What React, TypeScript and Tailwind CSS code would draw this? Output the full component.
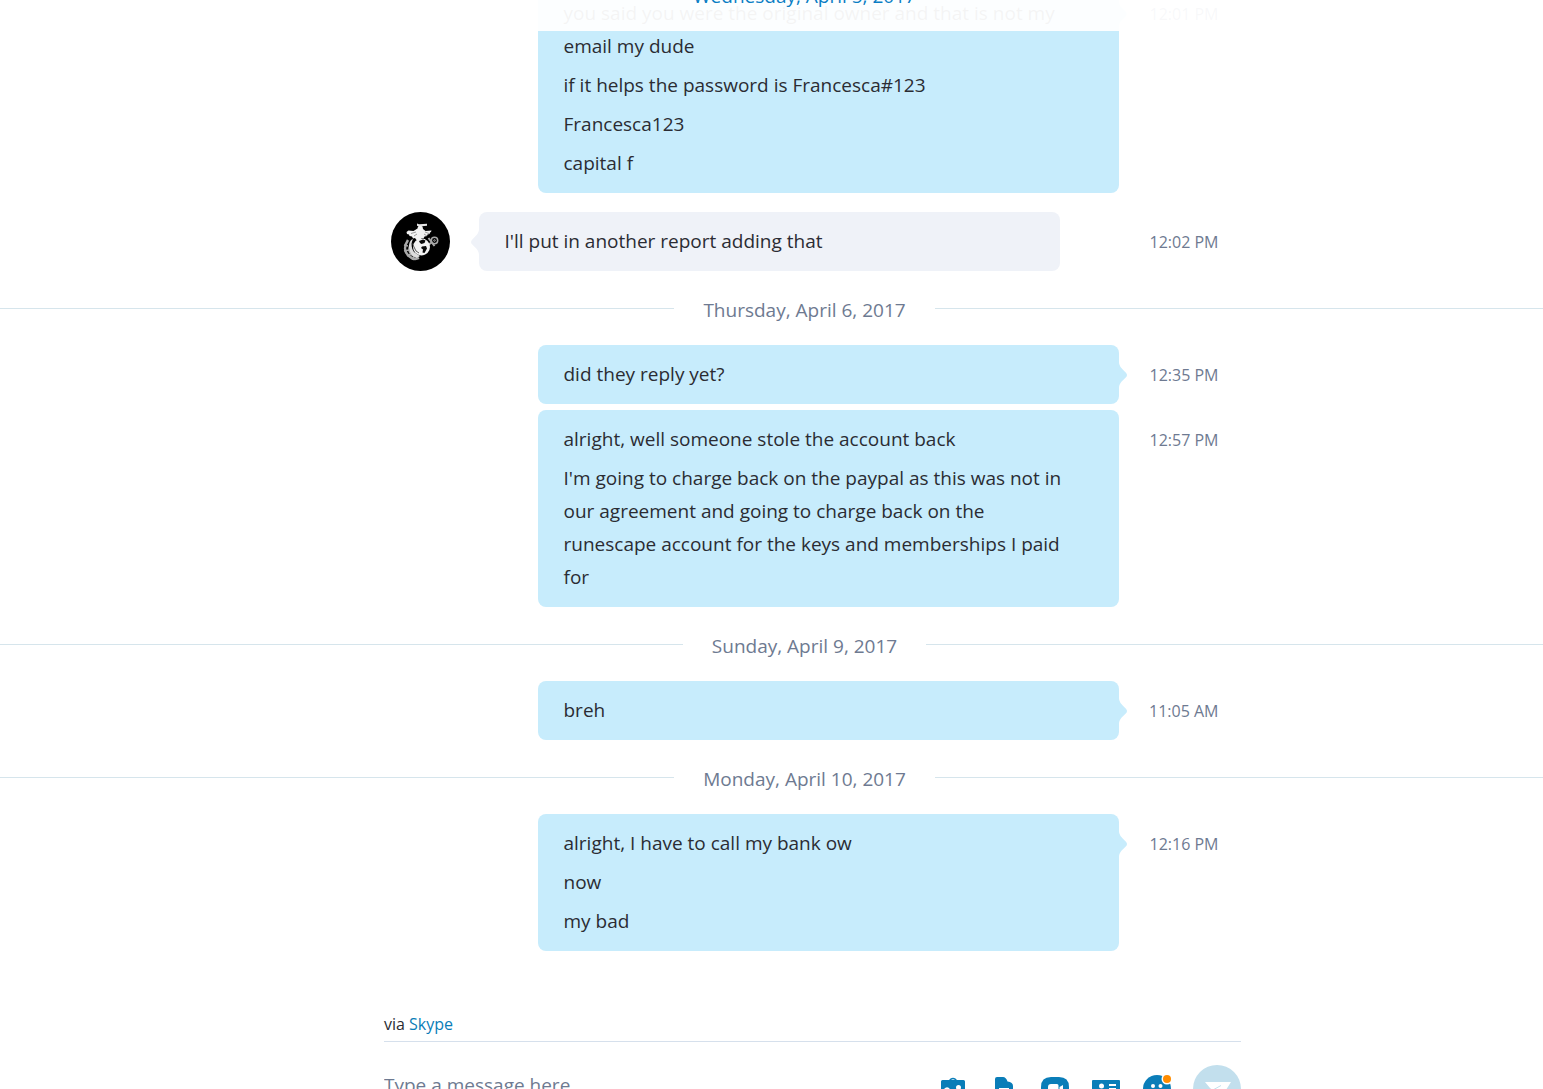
import { ReactNode } from "react";
import clsx from "clsx";

type Message = {
  time?: string;
  tail?: boolean;
  incoming?: boolean;
  lines: string[];
};

type Day = {
  date?: string;
  messages: Message[];
};

const days: Day[] = [
  {
    messages: [
      {
        time: "12:01 PM",
        tail: true,
        lines: [
          "you said you were the original owner and that is not my email my dude",
          "if it helps the password is Francesca#123",
          "Francesca123",
          "capital f",
        ],
      },
      {
        time: "12:02 PM",
        tail: true,
        incoming: true,
        lines: ["I'll put in another report adding that"],
      },
    ],
  },
  {
    date: "Thursday, April 6, 2017",
    messages: [
      { time: "12:35 PM", tail: true, lines: ["did they reply yet?"] },
      {
        time: "12:57 PM",
        lines: [
          "alright, well someone stole the account back",
          "I'm going to charge back on the paypal as this was not in our agreement and going to charge back on the runescape account for the keys and memberships I paid for",
        ],
      },
    ],
  },
  {
    date: "Sunday, April 9, 2017",
    messages: [{ time: "11:05 AM", tail: true, lines: ["breh"] }],
  },
  {
    date: "Monday, April 10, 2017",
    messages: [
      {
        time: "12:16 PM",
        tail: true,
        lines: ["alright, I have to call my bank ow", "now", "my bad"],
      },
    ],
  },
];

function Avatar() {
  return (
    <svg viewBox="0 0 59 59" className="size-[59px] shrink-0" role="img" aria-label="Contact">
      <circle cx="29.5" cy="29.5" r="29.5" fill="#000" />
      {/* anchor */}
      <g fill="none" stroke="#a8a8a8">
        <circle cx="43.5" cy="28.5" r="3.2" strokeWidth="1.5" />
        <circle cx="43.5" cy="28.5" r="0.8" />
        <path d="M36 34l5-4M37.500 26l6 8" strokeWidth="2" />
        <path d="M17 28c-4 6-4 12 1 16 3 3 7 3.500 10 2" strokeWidth="2.500" />
        <path d="M19 33c-2 4-1 8 3 11M13 33l4 1M13 39l5-1M16 44l4-2M22 48l1-4" strokeWidth="1.500" />
      </g>
      {/* globe */}
      <circle cx="30.500" cy="35" r="8.500" fill="#f2f2f2" />
      <path d="M22 27c-2 4-2 9 1 13l6 4-3 2c-5-1-8-6-8-11 0-4 1-7 4-8z" fill="#dcdcdc" />
      <path d="M28 29l4-1.500 2.500 1-1 2.500-3 1-1.500-1zM31 34.500l4-.5 1 2.500-2.500 4.500-2-.5.500-3-2-1.500z" fill="#080808" />
      <path d="M21 31l4 8 3 2" fill="none" stroke="#333" strokeWidth="0.800" />
      {/* eagle and scroll */}
      <path d="M26 11.500l2 .7 8-.4v2l-8 .6-2-.6z" fill="#e4e4e4" />
      <path
        d="M15.500 20l2-1.500 5 .5 4-2.500.5-2 2.500-1 2 1 .5 2.500 2.500 2 6-.5-.500 1.500-1 .5-.500 1.500-2 .5-.500 1.500-2.500.5-1 2-2-.5-1 2h-4l-1.500-2-2 .500-1-2-2.500-.5-.500-1.500-2-.500z"
        fill="#f2f2f2"
      />
      <path d="M20 21.500l5-1.500M23 24l3-2M34 20l4 1.500M33 22l3 2" stroke="#777" strokeWidth="0.700" />
    </svg>
  );
}

function Tail({ incoming }: { incoming?: boolean }) {
  return (
    <svg
      viewBox="0 0 8 26"
      aria-hidden="true"
      className={clsx(
        "absolute top-[17px] h-[26px] w-2",
        incoming ? "right-full -scale-x-100 fill-[#eff2f8]" : "left-full fill-[#c7ecfc]"
      )}
    >
      <path d="M0 0c0 4 3 7 6.500 10.200q3 2.800 0 5.600C3 19 0 22 0 26z" />
    </svg>
  );
}

function MessageRow({ message }: { message: Message }) {
  const { incoming, lines, time, tail } = message;

  return (
    <div className={clsx("flex items-start", !incoming && "pl-[147px]")}>
      {incoming ? (
        <div className="mr-[29px] shrink-0">
          <Avatar />
        </div>
      ) : null}
      <div
        className={clsx(
          "relative flex w-[581px] shrink-0 flex-col gap-1.5 rounded-lg py-[13px] pr-[46px] pl-[26px]",
          incoming ? "bg-[#eff2f8]" : "bg-[#c7ecfc]"
        )}
      >
        {lines.map((line) => (
          <p key={line} className="text-[19px] leading-[33px] text-[#2b2c33]">
            {line}
          </p>
        ))}
        {tail ? <Tail incoming={incoming} /> : null}
      </div>
      <time className="flex-1 pt-3.5 text-right text-base leading-[33px] text-[#6e7a91]">
        {time}
      </time>
    </div>
  );
}

function DateDivider({ date }: { date: string }) {
  return (
    <div className="flex h-[74px] items-center gap-[29px]">
      <div className="h-px flex-1 bg-[#d6e5ec]" />
      <h2 className="pt-1 text-[19px] leading-7 text-[#6e7a91]">{date}</h2>
      <div className="h-px flex-1 bg-[#d6e5ec]" />
    </div>
  );
}

function IconButton({ label, children }: { label: string; children: ReactNode }) {
  return (
    <button type="button" aria-label={label} className="size-7 text-[#0a7db8]">
      <svg viewBox="0 0 28 28" className="size-7" fill="currentColor" aria-hidden="true">
        {children}
      </svg>
    </button>
  );
}

function Composer() {
  return (
    <footer className="mt-[60px] w-[calc(100%+82px)]">
      <div className="mx-auto w-[857px]">
        <p className="pb-1 text-base leading-[26px] text-[#2b2c33]">
          via{" "}
          <a href="#skype" className="text-[#0a7db8]">
            Skype
          </a>
        </p>
        <div className="flex items-center border-t border-[#d6e0ec] pt-[23px]">
          <input
            type="text"
            aria-label="Message"
            placeholder="Type a message here"
            className="mb-2 min-w-0 flex-1 text-[19px] leading-7 outline-none placeholder:text-[#6e7a91]"
          />
          <div className="mr-[22px] flex gap-[23px]">
            <IconButton label="Add files">
              <path d="M2 6.500q0-1.500 1.500-1.500H10l1.500-1.500Q14 2 16.500 3.500L18 5h6.500Q26 5 26 6.500V23q0 2-2 2H4q-2 0-2-2z" />
              <path d="M12 5q2-1.500 4 0z" fill="#fff" />
              <circle cx="19.500" cy="12.500" r="2.500" fill="#fff" />
              <path d="M5 21v-7q2.500-3 5-1l6 8z" fill="#fff" />
            </IconButton>
            <IconButton label="Send document">
              <path d="M5 4q0-2 2-2h6q3 0 4.500 4.500Q23 7 23 11v13q0 2-2 2H7q-2 0-2-2z" />
              <path d="M9 13h10v1.500H9zM9 17h10v1.500H9z" fill="#fff" />
            </IconButton>
            <IconButton label="Video message">
              <path d="M0 12Q0 2 10 2h8q10 0 10 10v4q0 10-10 10h-8Q0 26 0 16z" />
              <path d="M7 12q0-3 3-3h6q1.500 0 1.500 1.500V19H9q-2 0-2-2zM18.500 12l3.500-2v8l-3.500-2z" fill="#fff" />
            </IconButton>
            <IconButton label="Send contact">
              <path d="M1 5h26q1 0 1 1v16q0 1-1 1H1q-1 0-1-1V6q0-1 1-1z" />
              <circle cx="9.500" cy="11" r="2.500" fill="#fff" />
              <path d="M5 18q0-4 4.500-4t4.500 4zM17 9h7v2h-7zM17 13h7v2h-7z" fill="#fff" />
            </IconButton>
            <IconButton label="Insert emoticon">
              <circle cx="14" cy="14" r="14" />
              <circle cx="10" cy="11" r="2" fill="#fff" />
              <circle cx="17.500" cy="11" r="2" fill="#fff" />
              <path d="M7 16h14q-1 6-7 6t-7-6z" fill="#fff" />
              <circle cx="24" cy="4" r="5.500" fill="#fff" />
              <circle cx="24" cy="4" r="4" fill="#ff8c00" />
            </IconButton>
          </div>
          <button
            type="button"
            aria-label="Send"
            className="flex size-12 items-center justify-center rounded-full bg-[#c2dfed]"
          >
            <svg viewBox="0 0 28 28" className="size-7" fill="#fff" aria-hidden="true">
              <path d="M2 7h26L16 26l-5-10-4-3z" />
              <path d="M9 15.500L18 10.500" stroke="#c2dfed" strokeWidth="1" />
            </svg>
          </button>
        </div>
      </div>
    </footer>
  );
}

export default function App() {
  return (
    <main className="relative h-screen overflow-hidden bg-white font-['Open_Sans','Noto_Sans',sans-serif]">
      <section className="-mt-4 w-[calc(100%+66px)]">
        {days.map((day, i) => (
          <div key={i}>
            {day.date ? <DateDivider date={day.date} /> : null}
            <div className="mx-auto flex w-[828px] flex-col">
              {day.messages.map((message, j) => (
                <div
                  key={j}
                  className={clsx(j > 0 && (message.incoming ? "mt-[19px]" : "mt-1.5"))}
                >
                  <MessageRow message={message} />
                </div>
              ))}
            </div>
          </div>
        ))}
      </section>

      {/* pinned day of the messages scrolled under the top edge */}
      <div className="absolute -top-[43px] left-0 flex h-[74px] w-[calc(100%+66px)] items-center justify-center bg-white/95">
        <h2 className="pt-1 text-[19px] leading-7 text-[#0a7dc4]">Wednesday, April 5, 2017</h2>
      </div>

      <Composer />
    </main>
  );
}
